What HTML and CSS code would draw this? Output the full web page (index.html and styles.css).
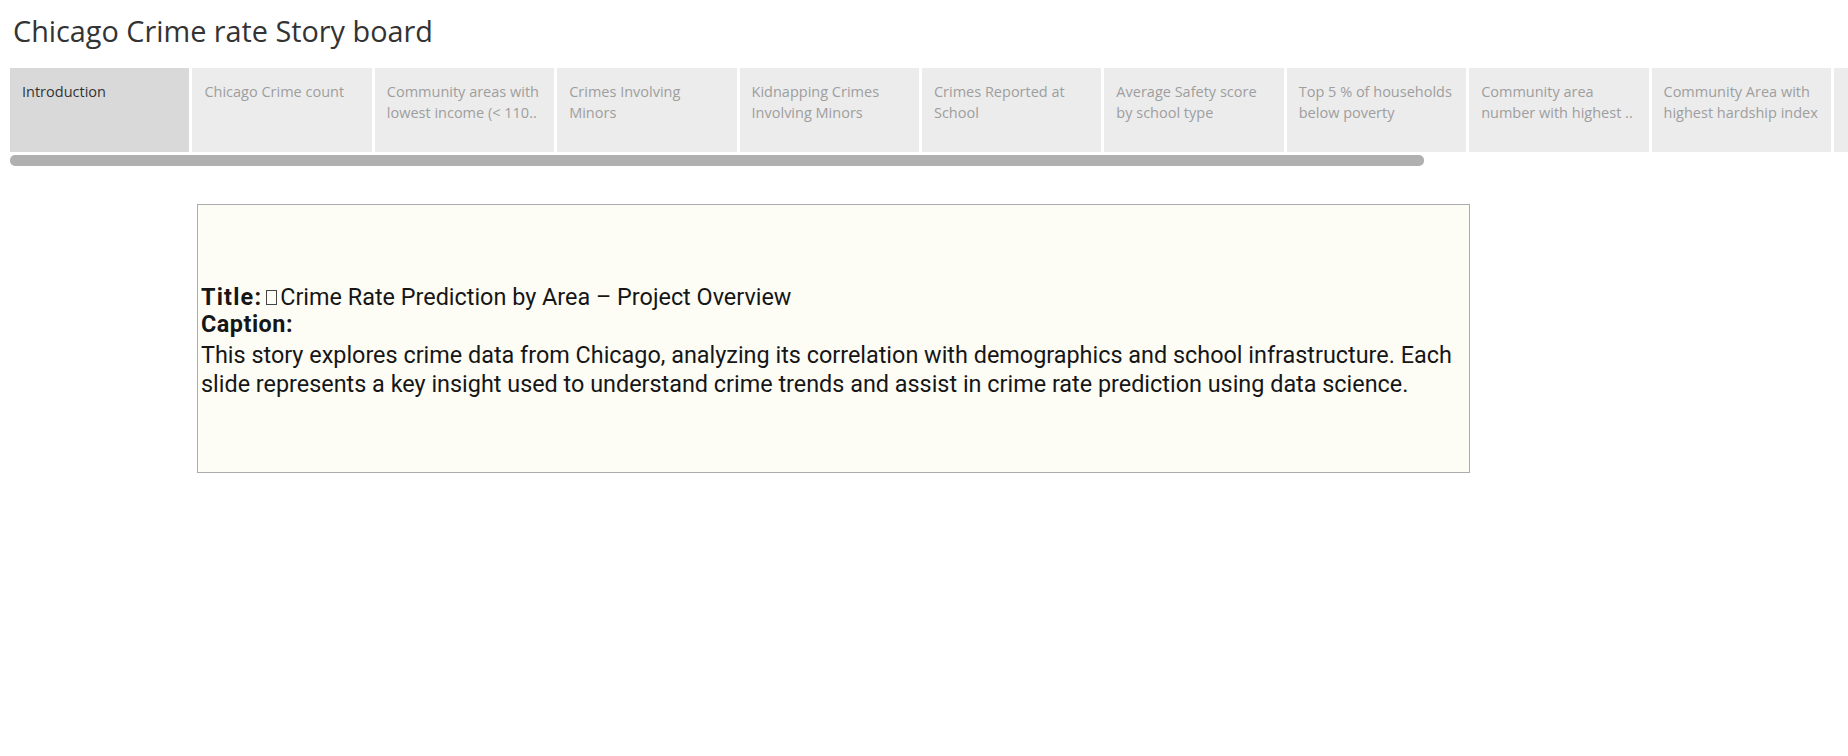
FILE: index.html
```html
<!DOCTYPE html>
<html lang="en">
<head>
<meta charset="utf-8">
<title>Chicago Crime rate Story board</title>
<link rel="stylesheet" href="styles.css">
</head>
<body>
<div class="page">
  <h1 class="story-title">Chicago Crime rate Story board</h1>
  <div class="tabs-wrap">
    <div class="tabs">
      <div class="tab tab-active">Introduction</div>
      <div class="tab">Chicago Crime count</div>
      <div class="tab">Community areas with lowest income (&lt; 110..</div>
      <div class="tab">Crimes Involving Minors</div>
      <div class="tab">Kidnapping Crimes Involving Minors</div>
      <div class="tab">Crimes Reported at School</div>
      <div class="tab">Average Safety score by school type</div>
      <div class="tab">Top 5 % of households below poverty</div>
      <div class="tab">Community area number with highest ..</div>
      <div class="tab">Community Area with highest hardship index</div>
      <div class="tab"></div>
    </div>
    <div class="scrollbar"></div>
  </div>
  <div class="stage">
    <div class="story-text">
      <p class="line"><b class="label-title">Title:</b><span class="tofu" aria-hidden="true"></span>Crime Rate Prediction by Area – Project Overview</p>
      <p class="line"><b class="label-caption">Caption:</b></p>
      <p class="body">This story explores crime data from Chicago, analyzing its correlation with demographics and school infrastructure. Each slide represents a key insight used to understand crime trends and assist in crime rate prediction using data science.</p>
    </div>
  </div>
</div>
</body>
</html>
```
FILE: styles.css
```css
html, body {
  margin: 0;
  padding: 0;
  background: #ffffff;
  overflow: hidden;
}

.page {
  width: 1848px;
  height: 756px;
  overflow: hidden;
  font-family: "Open Sans", "Liberation Sans", sans-serif;
}

.story-title {
  margin: 0;
  padding: 13px 0 0 13px;
  height: 57px;
  box-sizing: border-box;
  font-size: 28.8px;
  font-weight: 400;
  line-height: 36px;
  color: #333333;
}

.tabs-wrap {
  padding-left: 10px;
}

.tabs {
  display: flex;
  gap: 3px;
  height: 84px;
  margin-top: 11px;
}

.tab {
  flex: 0 0 179.4px;
  box-sizing: border-box;
  padding: 13px 10px 0 12px;
  background: #ececec;
  color: #9e9e9e;
  font-size: 14.5px;
  line-height: 21px;
  overflow: hidden;
}

.tab-active {
  background: #d9d9d9;
  color: #333333;
}

.scrollbar {
  width: 1414px;
  height: 11px;
  margin-top: 3px;
  background: #b0b0b0;
  border-radius: 5px;
}

.stage {
  margin: 38px 0 0 197px;
  width: 1273px;
  height: 269px;
  box-sizing: border-box;
  border: 1px solid #acacac;
  background: #fdfdf6;
  display: flex;
  align-items: center;
  padding: 5px 4px 0 3px;
}

.story-text {
  font-family: "Roboto", "Liberation Sans", sans-serif;
  color: #161616;
  font-size: 23.4px;
}

.story-text p {
  margin: 0;
}

.line {
  line-height: 27px;
}

.body {
  line-height: 29px;
  margin-top: 3px !important;
}

.story-text b {
  font-weight: 700;
}

.label-title {
  letter-spacing: 1.2px;
}

.label-caption {
  letter-spacing: 0.5px;
}

.tofu {
  display: inline-block;
  width: 11px;
  height: 15px;
  box-sizing: border-box;
  border: 1px solid #444444;
  margin: 0 3px 0 4px;
}
```
